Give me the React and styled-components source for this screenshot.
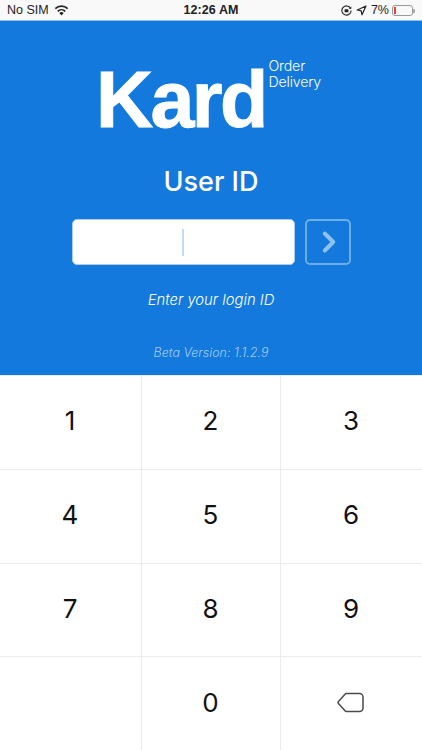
import React from "react";
import styled, { createGlobalStyle } from "styled-components";
import { FiChevronRight } from "react-icons/fi";

const Global = createGlobalStyle`
  html, body { margin: 0; padding: 0; background: #fff; }
  body { font-family: "Inter", "Liberation Sans", sans-serif; }
  * { box-sizing: border-box; }
`;

const Page = styled.div`
  width: 422px;
  height: 750px;
  display: flex;
  flex-direction: column;
  overflow: hidden;
`;

const StatusBar = styled.div`
  height: 21px;
  padding: 0 7px;
  display: grid;
  grid-template-columns: 1fr auto 1fr;
  align-items: center;
  background: #f9f9f9;
  border-bottom: 1px solid #8fc0ee;
  font-family: "Liberation Sans", sans-serif;
  font-size: 12.5px;
  color: #222;
`;

const StatusSide = styled.div`
  display: flex;
  align-items: center;
  gap: ${(p) => p.$gap || 5}px;
  justify-content: ${(p) => (p.$end ? "flex-end" : "flex-start")};
`;

const Clock = styled.span`
  font-weight: 700;
  font-size: 12.5px;
  letter-spacing: 0.1px;
`;

const Battery = styled.div`
  position: relative;
  width: 21px;
  height: 11px;
  border: 1px solid #999;
  border-radius: 3px;
  padding: 1px;
  margin-right: 2px;
  margin-left: -1px;
  &::after {
    content: "";
    position: absolute;
    right: -3px;
    top: 3px;
    width: 2px;
    height: 4px;
    background: #aaa;
    border-radius: 0 1px 1px 0;
  }
`;

const BatteryLevel = styled.div`
  width: 2px;
  height: 100%;
  background: #e8403a;
`;

const Header = styled.div`
  height: 354px;
  background: #1479dc;
  color: #fff;
  display: flex;
  flex-direction: column;
  align-items: center;
`;

const Brand = styled.div`
  margin-top: 37px;
  margin-left: -5px;
  display: flex;
  align-items: flex-start;
  gap: 3px;
`;

const BrandName = styled.div`
  font-family: "Liberation Sans", sans-serif;
  font-weight: 700;
  font-size: 79px;
  line-height: 84px;
  letter-spacing: -2.6px;
  height: 84px;
  -webkit-text-stroke: 1px #fff;
`;

const BrandTag = styled.div`
  font-size: 14.2px;
  line-height: 16px;
  font-weight: 300;
  letter-spacing: -0.2px;
`;

const Title = styled.h1`
  margin: 23px 0 0;
  font-size: 27px;
  line-height: 34px;
  font-weight: 500;
  letter-spacing: 0;
`;

const EntryRow = styled.div`
  margin-top: 20px;
  display: flex;
  gap: 10px;
`;

const Field = styled.div`
  width: 223px;
  height: 46px;
  background: #fff;
  border: 1px solid #a9cdf1;
  border-radius: 5px;
  display: flex;
  align-items: center;
  justify-content: center;
`;

const Caret = styled.div`
  width: 2px;
  height: 27px;
  background: #bfdcf6;
`;

const GoButton = styled.button`
  width: 46px;
  height: 46px;
  padding: 0 0 0 3px;
  border: 2px solid #6daee9;
  border-radius: 5px;
  background: transparent;
  color: #8fc1ef;
  display: flex;
  align-items: center;
  justify-content: center;
`;

const Hint = styled.div`
  margin-top: 25px;
  font-size: 14.8px;
  line-height: 20px;
  font-style: italic;
  font-weight: 300;
`;

const Version = styled.div`
  margin-top: 35px;
  font-size: 12.5px;
  line-height: 16px;
  font-style: italic;
  font-weight: 300;
  color: #a2ccf4;
`;

const Keypad = styled.div`
  flex: 1;
  display: grid;
  grid-template-columns: 141px 139px 142px;
  grid-template-rows: repeat(4, 1fr);
  background: #fff;
`;

const Key = styled.button`
  padding: 0 1px 3px 0;
  border: 0;
  border-top: 1px solid #ececec;
  border-left: ${(p) => (p.$first ? "0" : "1px solid #ececec")};
  background: #fff;
  color: #111;
  font-family: inherit;
  font-size: 26px;
  font-weight: 400;
  display: flex;
  align-items: center;
  justify-content: center;
`;

const BackspaceIcon = styled.svg`
  width: 27px;
  height: 21px;
  margin-right: 2px;
`;

const Wifi = () => (
  <svg width="15" height="11" viewBox="0 0 15 11">
    <path d="M7.5 10.5 5.3 8a3.2 3.2 0 0 1 4.4 0z" fill="#222" />
    <path d="M3.7 6.3a5.5 5.5 0 0 1 7.6 0" stroke="#222" strokeWidth="1.6" fill="none" />
    <path d="M1.3 3.6a9 9 0 0 1 12.4 0" stroke="#222" strokeWidth="1.6" fill="none" />
  </svg>
);

const RotationLock = () => (
  <svg width="11" height="11" viewBox="0 0 11 11">
    <path d="M9.6 3.4a4.6 4.6 0 1 0 .5 2.1" stroke="#222" strokeWidth="1.1" fill="none" />
    <path d="M10.4 1.4 10.2 4 7.8 3.4z" fill="#222" />
    <rect x="3.6" y="4.2" width="3.8" height="3" rx="0.5" fill="#222" />
  </svg>
);

const Location = () => (
  <svg width="11" height="11" viewBox="0 0 11 11">
    <path d="M10 1 1.2 5 5.2 5.8 6 9.8z" stroke="#222" strokeWidth="1.2" fill="none" strokeLinejoin="round" />
  </svg>
);

const Backspace = () => (
  <BackspaceIcon viewBox="0 0 27 21">
    <path
      d="M9.500 1.500H22.500A3.500 3.500 0 0 1 26 5V16A3.500 3.500 0 0 1 22.500 19.500H9.500A2 2 0 0 1 8 18.800L1.500 11.500A1.500 1.500 0 0 1 1.500 9.500L8 2.200A2 2 0 0 1 9.500 1.500Z"
      fill="none"
      stroke="#4a4a4f"
      strokeWidth="1.500"
      strokeLinejoin="round"
    />
  </BackspaceIcon>
);

const keys = ["1", "2", "3", "4", "5", "6", "7", "8", "9", "", "0", "back"];

export default function App() {
  return (
    <Page>
      <Global />
      <StatusBar>
        <StatusSide>
          <span>No SIM</span>
          <Wifi />
        </StatusSide>
        <Clock>12:26 AM</Clock>
        <StatusSide $end $gap={4}>
          <RotationLock />
          <Location />
          <span>7%</span>
          <Battery>
            <BatteryLevel />
          </Battery>
        </StatusSide>
      </StatusBar>
      <Header>
        <Brand>
          <BrandName>Kard</BrandName>
          <BrandTag>
            Order
            <br />
            Delivery
          </BrandTag>
        </Brand>
        <Title>User ID</Title>
        <EntryRow>
          <Field>
            <Caret />
          </Field>
          <GoButton aria-label="Next">
            <FiChevronRight size={34} strokeWidth={2.8} />
          </GoButton>
        </EntryRow>
        <Hint>Enter your login ID</Hint>
        <Version>Beta Version: 1.1.2.9</Version>
      </Header>
      <Keypad>
        {keys.map((k, i) => (
          <Key key={i} $first={i % 3 === 0}>
            {k === "back" ? <Backspace /> : k}
          </Key>
        ))}
      </Keypad>
    </Page>
  );
}
